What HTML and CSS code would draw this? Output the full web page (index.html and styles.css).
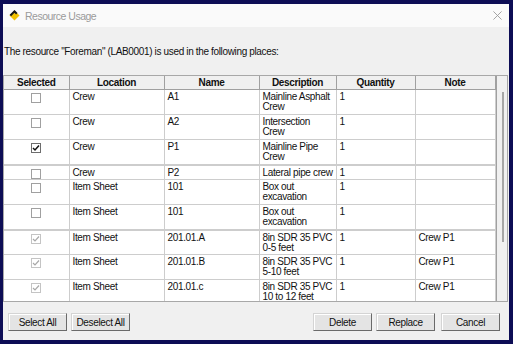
FILE: index.html
```html
<!DOCTYPE html>
<html lang="en">
<head>
    <meta charset="UTF-8">
    <meta name="viewport" content="width=device-width, initial-scale=1.0">
    <title>Resource Usage</title>
    <link rel="stylesheet" href="styles.css">
</head>
<body>
    <div class="window">
        <div class="titlebar">
            <svg class="logo" viewBox="0 0 12 12">
                <polygon points="6,0.5 11.5,6 6,11.5 0.5,6" fill="#f2c200"/>
                <polyline points="1.5,6 6,1.5 8.5,4" fill="none" stroke="#1a1a1a" stroke-width="2.2"/>
            </svg>
            <span class="title">Resource Usage</span>
            <svg class="close" viewBox="0 0 10 10">
                <path d="M0.5 0.5 L9.5 9.5 M9.5 0.5 L0.5 9.5" stroke="#9a9a9a" stroke-width="1"/>
            </svg>
        </div>

        <p class="message">The resource "Foreman" (LAB0001) is used in the following places:</p>

        <div class="grid">
            <table class="usage">
                <colgroup>
                    <col style="width:65px">
                    <col style="width:95px">
                    <col style="width:95px">
                    <col style="width:77px">
                    <col style="width:79px">
                    <col style="width:80px">
                </colgroup>
                <thead>
                    <tr>
                        <th>Selected</th>
                        <th>Location</th>
                        <th>Name</th>
                        <th>Description</th>
                        <th>Quantity</th>
                        <th>Note</th>
                    </tr>
                </thead>
                <tbody>
                    <tr class="two">
                        <td class="sel"><span class="cb"></span></td>
                        <td>Crew</td><td>A1</td><td>Mainline Asphalt<br>Crew</td><td>1</td><td></td>
                    </tr>
                    <tr class="two">
                        <td class="sel"><span class="cb"></span></td>
                        <td>Crew</td><td>A2</td><td>Intersection<br>Crew</td><td>1</td><td></td>
                    </tr>
                    <tr class="two">
                        <td class="sel"><span class="cb checked"><svg viewBox="0 0 8 8"><path d="M1 4 L3 6 L7 1.5" fill="none" stroke="#111" stroke-width="1.5"/></svg></span></td>
                        <td>Crew</td><td>P1</td><td>Mainline Pipe<br>Crew</td><td>1</td><td></td>
                    </tr>
                    <tr class="one thick">
                        <td class="sel"><span class="cb"></span></td>
                        <td>Crew</td><td>P2</td><td>Lateral pipe crew</td><td>1</td><td></td>
                    </tr>
                    <tr class="two">
                        <td class="sel"><span class="cb"></span></td>
                        <td>Item Sheet</td><td>101</td><td>Box out<br>excavation</td><td>1</td><td></td>
                    </tr>
                    <tr class="two">
                        <td class="sel"><span class="cb"></span></td>
                        <td>Item Sheet</td><td>101</td><td>Box out<br>excavation</td><td>1</td><td></td>
                    </tr>
                    <tr class="two thick">
                        <td class="sel"><span class="cb disabled"><svg viewBox="0 0 8 8"><path d="M1 4 L3 6 L7 1.5" fill="none" stroke="#a8a8a8" stroke-width="1.2"/></svg></span></td>
                        <td>Item Sheet</td><td>201.01.A</td><td>8in SDR 35 PVC<br>0-5 feet</td><td>1</td><td>Crew P1</td>
                    </tr>
                    <tr class="two">
                        <td class="sel"><span class="cb disabled"><svg viewBox="0 0 8 8"><path d="M1 4 L3 6 L7 1.5" fill="none" stroke="#a8a8a8" stroke-width="1.2"/></svg></span></td>
                        <td>Item Sheet</td><td>201.01.B</td><td>8in SDR 35 PVC<br>5-10 feet</td><td>1</td><td>Crew P1</td>
                    </tr>
                    <tr class="two">
                        <td class="sel"><span class="cb disabled"><svg viewBox="0 0 8 8"><path d="M1 4 L3 6 L7 1.5" fill="none" stroke="#a8a8a8" stroke-width="1.2"/></svg></span></td>
                        <td>Item Sheet</td><td>201.01.c</td><td>8in SDR 35 PVC<br>10 to 12 feet</td><td>1</td><td>Crew P1</td>
                    </tr>
                </tbody>
            </table>
            <div class="scrollbar">
                <div class="thumb"></div>
            </div>
        </div>

        <div class="buttons">
            <button>Select All</button>
            <button>Deselect All</button>
            <span class="spacer"></span>
            <button>Delete</button>
            <button>Replace</button>
            <button class="wide-gap">Cancel</button>
        </div>
    </div>
</body>
</html>
```

FILE: styles.css
```css
body {
    margin: 0;
    font-family: "Liberation Sans", Arial, sans-serif;
    background-color: #f0f0f0;
}

.window {
    width: 513px;
    height: 344px;
    box-sizing: border-box;
    border: 4px solid #0d0d55;
    border-left-width: 3px;
    background-color: #f0f0f0;
    display: flex;
    flex-direction: column;
}

.titlebar {
    height: 23px;
    flex-shrink: 0;
    background-color: #fafafa;
    display: flex;
    align-items: center;
    padding-left: 6px;
    color: #9a9a9a;
    font-size: 10.5px;
    letter-spacing: -0.5px;
}

.logo {
    width: 11px;
    height: 11px;
    margin-right: 5px;
}

.title {
    flex: 1;
}

.close {
    width: 9px;
    height: 9px;
    margin-right: 7px;
}

.message {
    margin: 19px 0 17px 1px;
    font-size: 10px;
    letter-spacing: -0.35px;
    line-height: 12px;
    color: #111;
}

.grid {
    display: flex;
    height: 227px;
    flex-shrink: 0;
    box-sizing: border-box;
    margin-right: 1px;
    border: 1px solid #a8a8a8;
    background-color: #fff;
    overflow: hidden;
}

.usage {
    width: 491px;
    table-layout: fixed;
    border-collapse: collapse;
    font-size: 10px;
    letter-spacing: -0.35px;
    line-height: 10px;
    color: #111;
    align-self: flex-start;
}

.usage th {
    height: 13px;
    padding: 0;
    background-color: #f0f0f0;
    border: 1px solid #a0a0a0;
    border-top: 0;
    font-weight: bold;
    text-align: center;
}

.usage td {
    padding: 2px 3px 0;
    border: 1px solid #cdcdcd;
    vertical-align: top;
    white-space: nowrap;
    overflow: hidden;
}

.usage th:first-child,
.usage td:first-child {
    border-left: 0;
}

.usage tr.two {
    height: 25px;
}

.usage tr.one {
    height: 15px;
}

.usage tr.thick td {
    border-top: 2px solid #cdcdcd;
}

.usage td.sel {
    text-align: center;
    padding-top: 3px;
}

.cb {
    display: inline-block;
    width: 8px;
    height: 8px;
    border: 1px solid #a0a0a0;
    background-color: #fff;
    vertical-align: top;
}

.cb svg {
    display: block;
    width: 8px;
    height: 8px;
}

.cb.checked {
    border-color: #6d6d6d;
}

.cb.disabled {
    border-color: #c4c4c4;
}

.scrollbar {
    flex: 1;
    background-color: #f0f0f0;
    border-left: 1px solid #a0a0a0;
    padding: 16px 0 0 5px;
}

.thumb {
    width: 2px;
    height: 150px;
    background-color: #a6a6a6;
}

.buttons {
    display: flex;
    align-items: flex-start;
    padding: 11px 9px 0 5px;
}

.buttons button {
    width: 59px;
    height: 18px;
    margin-right: 4px;
    padding: 0;
    font-family: "Liberation Sans", Arial, sans-serif;
    font-size: 10px;
    letter-spacing: -0.35px;
    color: #111;
    background-color: #e4e4e4;
    border: 1px solid;
    border-color: #d4d4d4 #6a6a6a #6a6a6a #d4d4d4;
    box-shadow: inset 1px 1px 0 #fff;
}

.buttons button:last-child {
    margin-right: 0;
}

.buttons .wide-gap {
    margin-left: 2px;
}

.spacer {
    flex: 1;
}
```
